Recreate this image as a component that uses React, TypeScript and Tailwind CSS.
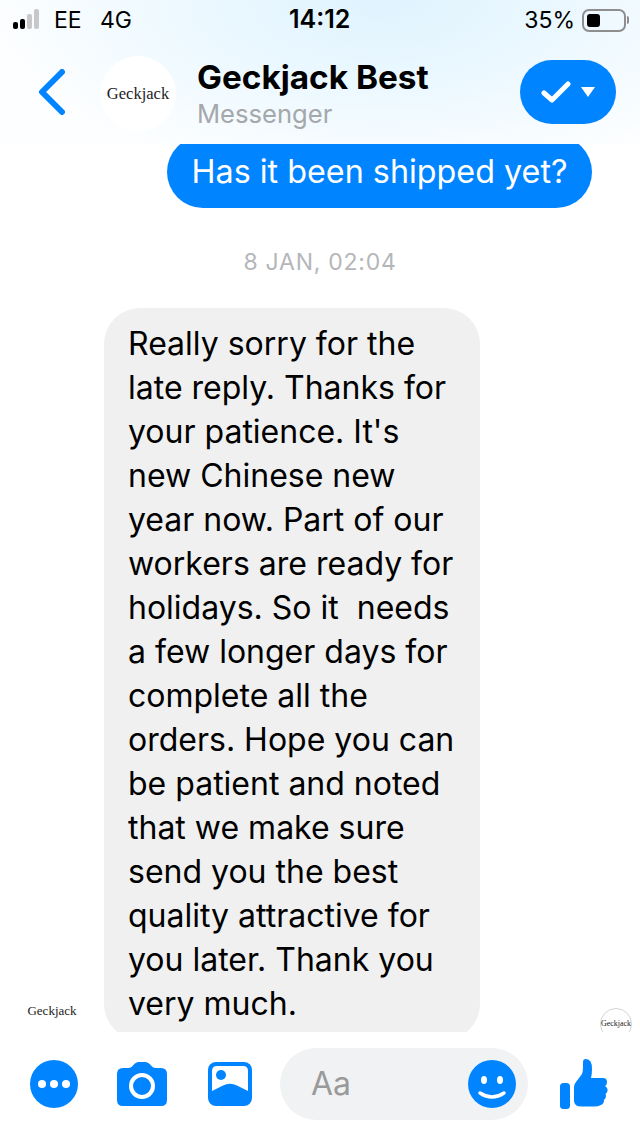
const BLUE = "#0084ff";

const replyLines = [
  "Really sorry for the",
  "late reply. Thanks for",
  "your patience. It's",
  "new Chinese new",
  "year now. Part of our",
  "workers are ready for",
  "holidays. So it  needs",
  "a few longer days for",
  "complete all the",
  "orders. Hope you can",
  "be patient and noted",
  "that we make sure",
  "send you the best",
  "quality attractive for",
  "you later. Thank you",
  "very much.",
];

function StatusBar() {
  return (
    <div className="h-[40px] flex items-center pl-[13px] pr-[11px] text-[23px] text-black">
      <div className="flex items-end gap-[2px] h-[20px] mb-[2px]">
        <div className="w-[5px] h-[7px] rounded-[2px] bg-black" />
        <div className="w-[5px] h-[10px] rounded-[2px] bg-black" />
        <div className="w-[5px] h-[15px] rounded-[2px] bg-[#c8c8c8]" />
        <div className="w-[5px] h-[20px] rounded-[2px] bg-[#c8c8c8]" />
      </div>
      <span className="ml-[15px] w-[46px]">EE</span>
      <span>4G</span>
      <span className="ml-[157px] text-[25px] font-semibold">14:12</span>
      <span className="ml-auto">35%</span>
      <div className="ml-[7px] w-[44px] h-[23px] rounded-[7px] border-2 border-[#8e8e8e] p-[3px]">
        <div className="w-[13px] h-full rounded-[3px] bg-black" />
      </div>
      <div className="w-[2px] h-[8px] ml-[1px] rounded-r bg-[#8e8e8e]" />
    </div>
  );
}

function NavBar() {
  return (
    <div className="h-[104px] flex items-start pt-[16px]">
      <svg className="ml-[38px] mt-[13px] w-[28px] h-[46px]" viewBox="0 0 28 46" fill="none">
        <path d="M24 3 L4 23 L24 43" stroke={BLUE} strokeWidth="6" strokeLinecap="round" strokeLinejoin="round" />
      </svg>
      <div className="ml-[34px] w-[76px] h-[76px] rounded-full bg-white flex items-center justify-center font-['Liberation_Serif',serif] text-[16.5px] text-[#222]">
        Geckjack
      </div>
      <div className="ml-[21px] mt-[1px]">
        <div className="text-[33.3px] leading-[40px] font-bold text-black">Geckjack Best</div>
        <div className="text-[25.6px] leading-[34px] text-[#a5a8ab]">Messenger</div>
      </div>
      <div className="ml-auto mr-[24px] mt-[4px] w-[96px] h-[64px] rounded-full bg-[#0084ff] flex items-center justify-center gap-[10px]">
        <svg className="w-[30px] h-[24px]" viewBox="0 0 30 24" fill="none">
          <path d="M3 13 L11 20 L27 4" stroke="white" strokeWidth="5" strokeLinecap="round" strokeLinejoin="round" />
        </svg>
        <svg className="w-[14px] h-[10px]" viewBox="0 0 14 10">
          <path d="M0 0 H14 L7 10 Z" fill="white" />
        </svg>
      </div>
    </div>
  );
}

function Messages() {
  return (
    <div className="flex-1 min-h-0 overflow-hidden flex flex-col">
      <div className="shrink-0 -mt-[8px] self-end mr-[48px] h-[72px] w-[425px] rounded-[36px] bg-[#0084ff] text-white text-[32.3px] flex items-center justify-center">
        Has it been shipped yet?
      </div>
      <div className="shrink-0 mt-[36px] text-center text-[23px] leading-[36px] tracking-[0.75px] text-[#b4b6b9]">
        8 JAN, 02:04
      </div>
      <div className="shrink-0 mt-[28px] flex items-end">
        <div className="w-[104px] h-[56px] pb-[2px] flex items-center justify-center font-['Liberation_Serif',serif] text-[13px] text-[#222]">
          Geckjack
        </div>
        <div className="w-[376px] rounded-[36px] bg-[#f0f0f0] pl-[24px] py-[14px] text-[32px] leading-[44px] text-black whitespace-pre">
          {replyLines.map((line) => (
            <div key={line}>{line}</div>
          ))}
        </div>
        <div className="ml-auto mr-[8px] w-[32px] h-[32px] rounded-full border border-[#d4d4d4] flex items-center justify-center font-['Liberation_Serif',serif] text-[8px] text-[#222]">
          Geckjack
        </div>
      </div>
    </div>
  );
}

function Footer() {
  return (
    <div className="h-[104px] shrink-0 flex items-center">
      <svg className="ml-[30px] w-[48px] h-[48px]" viewBox="0 0 48 48">
        <circle cx="24" cy="24" r="24" fill={BLUE} />
        <circle cx="12" cy="24" r="4" fill="white" />
        <circle cx="24" cy="24" r="4" fill="white" />
        <circle cx="36" cy="24" r="4" fill="white" />
      </svg>
      <svg className="ml-[39px] w-[50px] h-[44px]" viewBox="0 0 50 44">
        <path
          d="M6 6 H11 Q14 6 16 3.5 Q18.5 0 22 0 H28 Q31.5 0 34 3.5 Q36 6 39 6 H44 Q50 6 50 12 V38 Q50 44 44 44 H6 Q0 44 0 38 V12 Q0 6 6 6 Z"
          fill={BLUE}
        />
        <circle cx="25" cy="24" r="11" fill="none" stroke="white" strokeWidth="4" />
      </svg>
      <div className="ml-[41px] w-[44px] h-[44px]">
        <svg className="w-[44px] h-[44px]" viewBox="0 0 44 44">
          <rect x="0" y="0" width="44" height="44" rx="8" fill={BLUE} />
          <path d="M4 9 Q4 4 9 4 H35 Q40 4 40 9 V29 L29 23.5 Q22 20 15 23.5 L4 29 Z" fill="white" />
          <circle cx="13" cy="13" r="5" fill={BLUE} />
        </svg>
      </div>
      <div className="ml-[28px] w-[248px] h-[72px] rounded-full bg-[#f1f2f4] flex items-center pl-[31px] pr-[12px] text-[32px] text-[#9a9a9a]">
        <span>Aa</span>
        <svg className="ml-auto w-[48px] h-[48px]" viewBox="0 0 48 48">
          <circle cx="24" cy="24" r="24" fill={BLUE} />
          <ellipse cx="16" cy="20" rx="3" ry="4" fill="white" />
          <ellipse cx="32" cy="20" rx="3" ry="4" fill="white" />
          <path d="M12 33 Q24 41 36 33" fill="none" stroke="white" strokeWidth="3.5" strokeLinecap="round" />
        </svg>
      </div>
      <svg className="ml-[32px] w-[48px] h-[50px]" viewBox="0 0 48 50">
        <rect x="0" y="24" width="10" height="26" rx="3.5" fill={BLUE} />
        <path
          d="M14 28 Q14 25 16 23 L22 15 Q23 13 23 8 V3 Q23 0 26 0 Q32 0 32 10 Q32 15 31 19 H43 Q47 19 47 23 Q47 26 45 27 Q48 29 47.5 32 Q47 34 45.5 35 Q47 38 44 41 Q44 45 41 46 Q38 47.5 34 47.5 H22 Q14 47.5 14 42 Z"
          fill={BLUE}
        />
      </svg>
    </div>
  );
}

export default function App() {
  return (
    <div className="w-[640px] h-[1136px] flex flex-col overflow-hidden bg-white font-['Inter',sans-serif]">
      <div className="h-[144px] shrink-0 relative z-10 bg-[radial-gradient(ellipse_400px_185px_at_60%_0%,#dff3fe_0%,#eef9ff_55%,#fdfeff_100%)]">
        <StatusBar />
        <NavBar />
      </div>
      <Messages />
      <Footer />
    </div>
  );
}
